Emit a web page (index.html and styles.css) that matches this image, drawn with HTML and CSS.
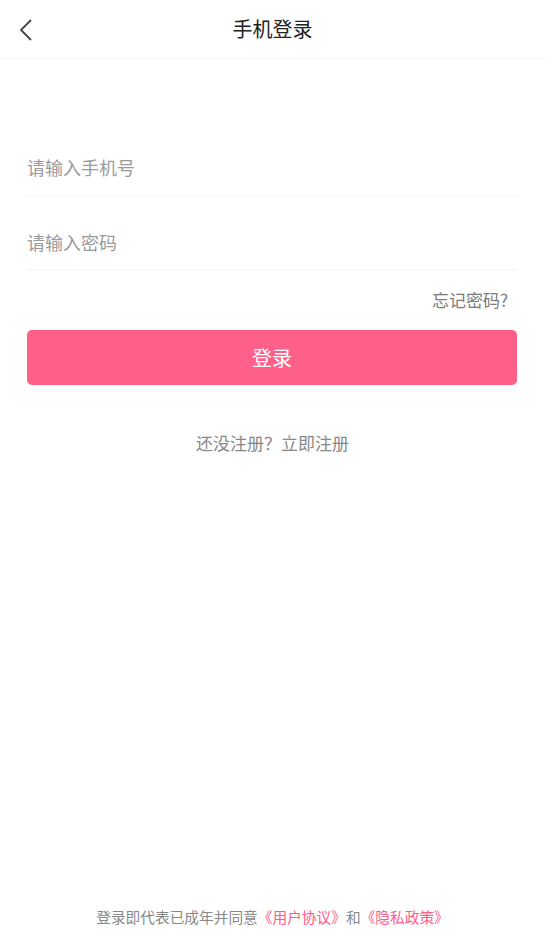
FILE: index.html
```html
<!DOCTYPE html>
<html lang="zh">
<head>
<meta charset="utf-8">
<link rel="stylesheet" href="styles.css">
</head>
<body>
<div class="page">
  <header class="topbar">
    <span class="back">
      <svg width="14" height="22" viewBox="0 0 14 22"><path d="M12 1 L2 11 L12 21" fill="none" stroke="#444" stroke-width="1.8"/></svg>
    </span>
    <h1 class="title">手机登录</h1>
  </header>
  <main class="form">
    <div class="field"><span class="placeholder">请输入手机号</span></div>
    <div class="field"><span class="placeholder">请输入密码</span></div>
    <div class="forgot">忘记密码?</div>
    <button class="login">登录</button>
    <div class="register">还没注册？立即注册</div>
  </main>
  <footer class="agree">登录即代表已成年并同意<span class="link">《用户协议》</span>和<span class="link">《隐私政策》</span></footer>
</div>
</body>
</html>
```
FILE: styles.css
```css
* { box-sizing: border-box; }
html, body { margin: 0; padding: 0; background: #fff; }
body { font-family: "Noto Sans CJK SC", "Noto Sans", sans-serif; }
.page { width: 545px; height: 947px; display: flex; flex-direction: column; }
.topbar { height: 59px; display: flex; align-items: center; justify-content: center; position: relative; border-bottom: 1px solid #f7f7f7; }
.back { position: absolute; left: 19px; top: 19px; width: 14px; height: 22px; display: flex; }
.title { margin: 0; font-size: 20px; font-weight: 400; color: #222; line-height: 1; }
.form { padding: 0 28px 0 27px; margin-top: 74px; display: flex; flex-direction: column; }
.field { height: 64px; border-bottom: 1px solid #f4f4f4; display: flex; align-items: flex-start; padding-top: 25px; }
.field + .field { height: 73px; padding-top: 36px; }
.placeholder { font-size: 18px; color: #9a9a9a; line-height: 1; }
.forgot { align-self: flex-end; margin-top: 21px; margin-right: 9px; font-size: 17px; color: #7a7a7a; line-height: 1; }
.login { margin-top: 22px; height: 55px; border: none; border-radius: 5px; background: #ff6089; color: #fff; font-family: inherit; font-size: 20px; }
.register { margin-top: 49px; text-align: center; font-size: 17px; color: #888; line-height: 1; padding-left: 1px; }
.agree { margin-top: auto; margin-bottom: 22px; text-align: center; font-size: 14.7px; color: #888; line-height: 1; }
.link { color: #ff5a88; }
```
